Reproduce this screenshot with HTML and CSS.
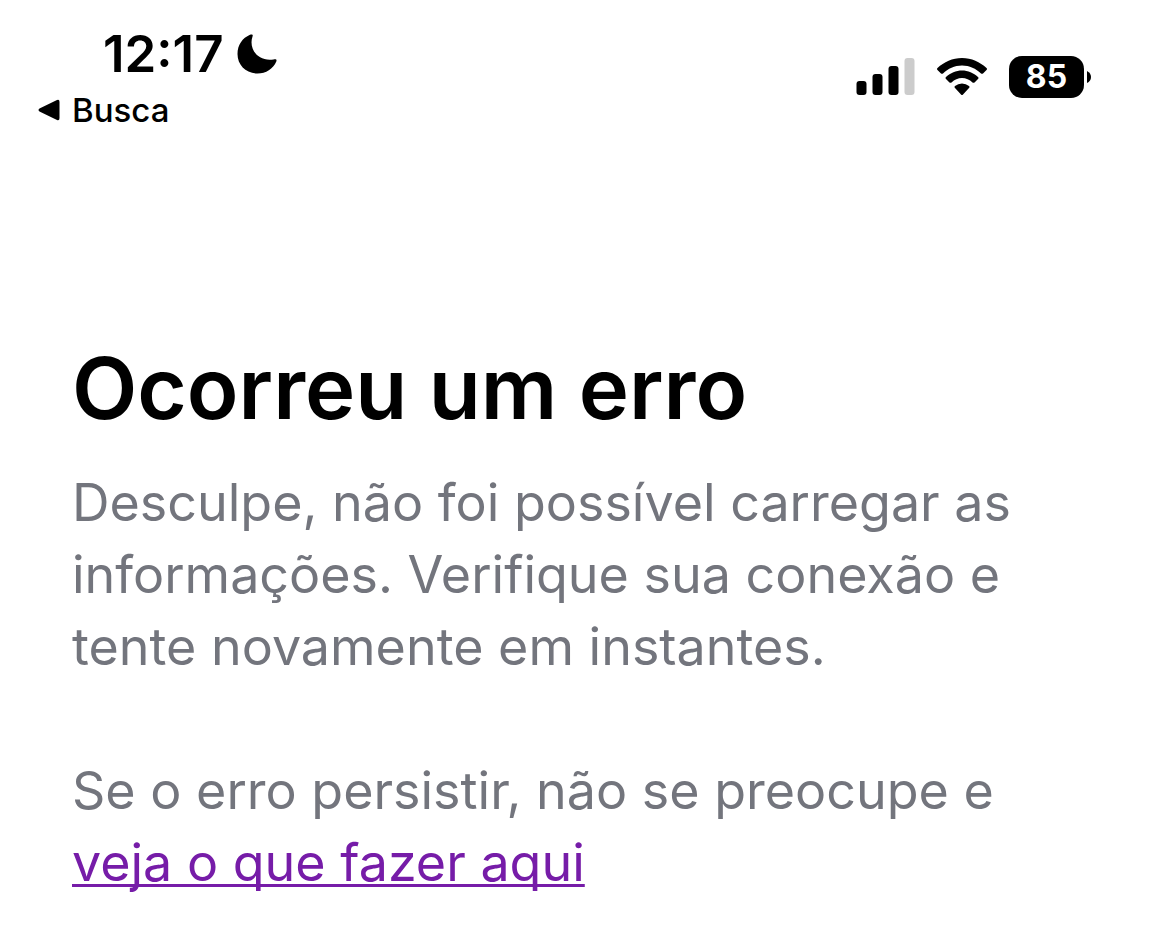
FILE: index.html
```html
<!DOCTYPE html>
<html lang="pt-BR">
<head>
<meta charset="utf-8">
<meta name="viewport" content="width=device-width, initial-scale=1">
<title>Ocorreu um erro</title>
<link rel="stylesheet" href="styles.css">
</head>
<body>
<header class="status">
  <div class="status-left">
    <div class="clock"><time>12:17</time>
      <svg class="moon" viewBox="0 0 40 40" aria-hidden="true"><path d="M13 .8C15 0 16.300 .5 15.500 2.500C11.500 14 20 28 36.500 25.500C39 25 40 25.500 39.300 27.500C36 35 29 39.500 20.500 39.500C9 39.500 .5 31 .5 20C.5 11 5.500 4 13 .8Z"/></svg>
    </div>
    <button class="back" type="button"><svg class="arrow" viewBox="0 0 22 22" aria-hidden="true"><path d="M1.500 9.500L19 1Q21.500 0 21.500 3V19Q21.500 22 19 21L1.500 12.500Q-.5 11 1.500 9.500Z"/></svg>Busca</button>
  </div>
  <div class="status-right">
    <svg class="signal" viewBox="0 0 58 38" aria-hidden="true"><rect y="23" width="10" height="14" rx="3"/><rect x="16" y="16" width="10" height="21" rx="3"/><rect x="32" y="8" width="10" height="29" rx="3"/><rect class="dim" x="48" width="10" height="37" rx="3"/></svg>
    <svg class="wifi" viewBox="0 0 50 38" aria-hidden="true"><path d="M25 0C34.500 0 43 4 49.500 10Q50.500 11 49.500 12L46 15.500Q45 16 44 15.500C39 10.500 32.500 7.500 25 7.500S11 10.500 6 15.500Q5 16 4 15.500L.5 12Q-.5 11 .5 10C7 4 15.500 0 25 0ZM25 12.500C31 12.500 36.500 15 41 19Q42 20 41 21L37.500 24.500Q36.500 25 35.500 24.500C32.500 21.500 29 20 25 20S17.500 21.500 14.500 24.500Q13.500 25 12.500 24.500L9 21Q8 20 9 19C13.500 15 19 12.500 25 12.500ZM25 25.500Q29 25.500 32 28Q33 29 32 30L26 36.500Q25 37.500 24 36.500L18 30Q17 29 18 28Q21 25.500 25 25.500Z"/></svg>
    <div class="battery"><span class="level">85</span><svg class="cap" viewBox="0 0 4 14" aria-hidden="true"><path d="M0 1Q4 3 4 7T0 13Z"/></svg></div>
  </div>
</header>
<main class="content">
  <h1 class="title">Ocorreu um erro</h1>
  <p class="message">Desculpe, não foi possível carregar as<br>informações. Verifique sua conexão e<br>tente novamente em instantes.</p>
  <p class="message">Se o erro persistir, não se preocupe e<br><a class="help" href="#">veja o que fazer aqui</a></p>
</main>
</body>
</html>
```
FILE: styles.css
```css
* { box-sizing: border-box; }
body { margin: 0; background: #fff; color: #000; font-family: Inter, sans-serif; }
svg { display: block; }
.status { display: flex; justify-content: space-between; padding: 24px 79px 0 38px; }
.clock { display: flex; align-items: center; gap: 13px; padding-left: 65px; font-size: 51px; font-weight: 600; line-height: 60px; }
.moon { width: 40px; height: 40px; }
.back { display: flex; align-items: center; gap: 12px; padding: 6px 0 0; border: 0; background: none; color: inherit; font: 500 33px/40px Inter, sans-serif; }
.arrow { width: 22px; height: 22px; }
.status-right { display: flex; align-items: center; gap: 22px; height: 42px; margin-top: 32px; }
.signal { width: 59px; height: 38px; }
.dim { fill: #ccc; }
.wifi { width: 50px; height: 38px; }
.battery { display: flex; align-items: center; gap: 3px; }
.level { width: 75px; border-radius: 13px; background: #000; color: #fff; font-size: 32px; font-weight: 700; line-height: 42px; text-align: center; }
.cap { width: 4px; height: 14px; }
.content { padding: 207px 72px 0; }
.title { margin: 0 0 26px; font-size: 85px; font-weight: 600; line-height: 104px; }
.message { margin: 0; color: #73757d; font-size: 52px; line-height: 72px; }
.message + .message { margin-top: 72px; }
.help { color: #761ca8; text-decoration-thickness: 3px; text-underline-offset: 3px; text-decoration-skip-ink: none; }
```
